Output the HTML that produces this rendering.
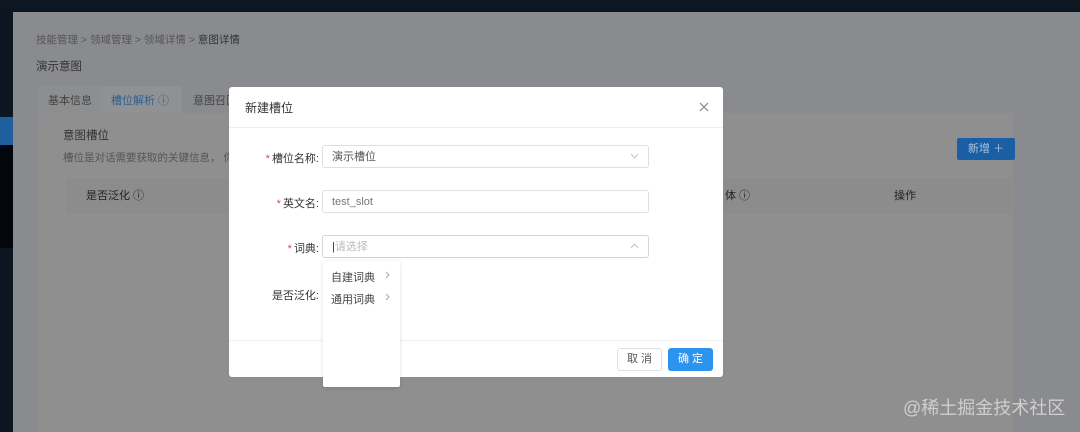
<!DOCTYPE html>
<html><head><meta charset="utf-8"><style>
*{box-sizing:border-box;margin:0;padding:0}
body{width:1080px;height:432px;overflow:hidden;background:#8a8b8e;font-family:"Liberation Sans","Noto Sans CJK SC",sans-serif;font-size:11px;color:#2a2a2a;position:relative}
.a{position:absolute}
.top{left:0;top:0;width:1080px;height:12px;background:#0d1722}
.side{left:0;top:12px;width:13px;height:420px;background:#0d1620}
.t{white-space:nowrap}
.dlg{left:229px;top:87px;width:494px;height:290px;background:#fff;border-radius:3px}
.lbl{text-align:right;width:90px;font-size:11px;color:#333}
.star{color:#e44;margin-right:2px}
.inp{left:93px;width:327px;height:23px;border:1px solid #dcdfe6;border-radius:3px;padding-left:9px;line-height:22px;color:#555;font-size:11px}
.chev{position:absolute;right:9px;top:7px}
</style></head><body>
<div class="a top"></div>
<div class="a side"></div>
<div class="a" style="left:0;top:117px;width:13px;height:28px;background:#1f5f9e"></div>
<div class="a" style="left:0;top:145px;width:13px;height:103px;background:#03070d"></div>
<div class="a t" style="left:36px;top:32px;color:#555;font-size:10.5px">技能管理 &gt; 领域管理 &gt; 领域详情 &gt; <span style="color:#333">意图详情</span></div>
<div class="a t" style="left:36px;top:58px;font-size:11.5px;color:#333">演示意图</div>
<div class="a" style="left:38px;top:86px;width:62px;height:28px;background:#8d8e90"></div>
<div class="a t" style="left:48px;top:92px;color:#444">基本信息</div>
<div class="a" style="left:100px;top:86px;width:82px;height:28px;background:#909192"></div>
<div class="a t" style="left:111px;top:92px;color:#2d5f95">槽位解析 ⓘ</div>
<div class="a t" style="left:193px;top:92px;color:#444">意图召回</div>
<div class="a" style="left:38px;top:113px;width:975px;height:319px;background:#8f8f8f"></div>
<div class="a t" style="left:63px;top:127px;font-size:11.5px;color:#333">意图槽位</div>
<div class="a t" style="left:63px;top:150px;font-size:10.5px;color:#555">槽位是对话需要获取的关键信息， 你</div>
<div class="a" style="left:66px;top:178px;width:946px;height:36px;background:#8c8c8c"></div>
<div class="a t" style="left:86px;top:187px;color:#222">是否泛化 ⓘ</div>
<div class="a t" style="left:725px;top:187px;color:#222">体 ⓘ</div>
<div class="a t" style="left:894px;top:187px;color:#222">操作</div>
<div class="a" style="left:957px;top:138px;width:58px;height:22px;background:#1a5fa3;border-radius:2px;color:#a9c4df;line-height:22px;text-align:center">新增 ＋</div>
<div class="a t" style="left:903px;top:394px;font-size:18px;color:#cfcfcf">@稀土掘金技术社区</div>

<div class="a dlg">
 <div class="a t" style="left:16px;top:12px;font-size:12px;color:#333">新建槽位</div>
 <svg class="a" style="left:470px;top:15px" width="10" height="10"><path d="M1 1L9 9M9 1L1 9" stroke="#888" stroke-width="1.2"/></svg>
 <div class="a" style="left:0;top:40px;width:494px;height:1px;background:#eee"></div>
 <div class="a lbl" style="left:0;top:63px"><span class="star">*</span>槽位名称:</div>
 <div class="a inp" style="top:58px">演示槽位<svg class="chev" width="9" height="6"><path d="M1 1L4.5 5L8 1" stroke="#c0c4cc" fill="none"/></svg></div>
 <div class="a lbl" style="left:0;top:108px"><span class="star">*</span>英文名:</div>
 <div class="a inp" style="top:103px;color:#777">test_slot</div>
 <div class="a lbl" style="left:0;top:153px"><span class="star">*</span>词典:</div>
 <div class="a inp" style="top:148px;color:#bbb;border-color:#d0d4dc"><span style="color:#333">|</span>请选择<svg class="chev" width="9" height="6"><path d="M1 5L4.5 1L8 5" stroke="#c0c4cc" fill="none"/></svg></div>
 <div class="a lbl" style="left:0;top:200px">是否泛化:</div>
 <div class="a" style="left:0;top:253px;width:494px;height:1px;background:#eee"></div>
 <div class="a" style="left:388px;top:261px;width:45px;height:23px;border:1px solid #dcdfe6;border-radius:3px;text-align:center;line-height:21px;color:#555">取 消</div>
 <div class="a" style="left:439px;top:261px;width:45px;height:23px;background:#2c93ef;border-radius:3px;text-align:center;line-height:23px;color:#fff">确 定</div>
</div>
<div class="a" style="left:323px;top:261px;width:77px;height:126px;background:#fff;border-radius:2px;box-shadow:0 1px 4px rgba(0,0,0,.12)">
 <div class="a t" style="left:8px;top:8px;color:#444">自建词典</div><svg class="a" style="left:62px;top:10px" width="5" height="8"><path d="M1 1L4 4L1 7" stroke="#aaa" fill="none"/></svg>
 <div class="a t" style="left:8px;top:30px;color:#444">通用词典</div><svg class="a" style="left:62px;top:32px" width="5" height="8"><path d="M1 1L4 4L1 7" stroke="#aaa" fill="none"/></svg>
</div>
</body></html>
